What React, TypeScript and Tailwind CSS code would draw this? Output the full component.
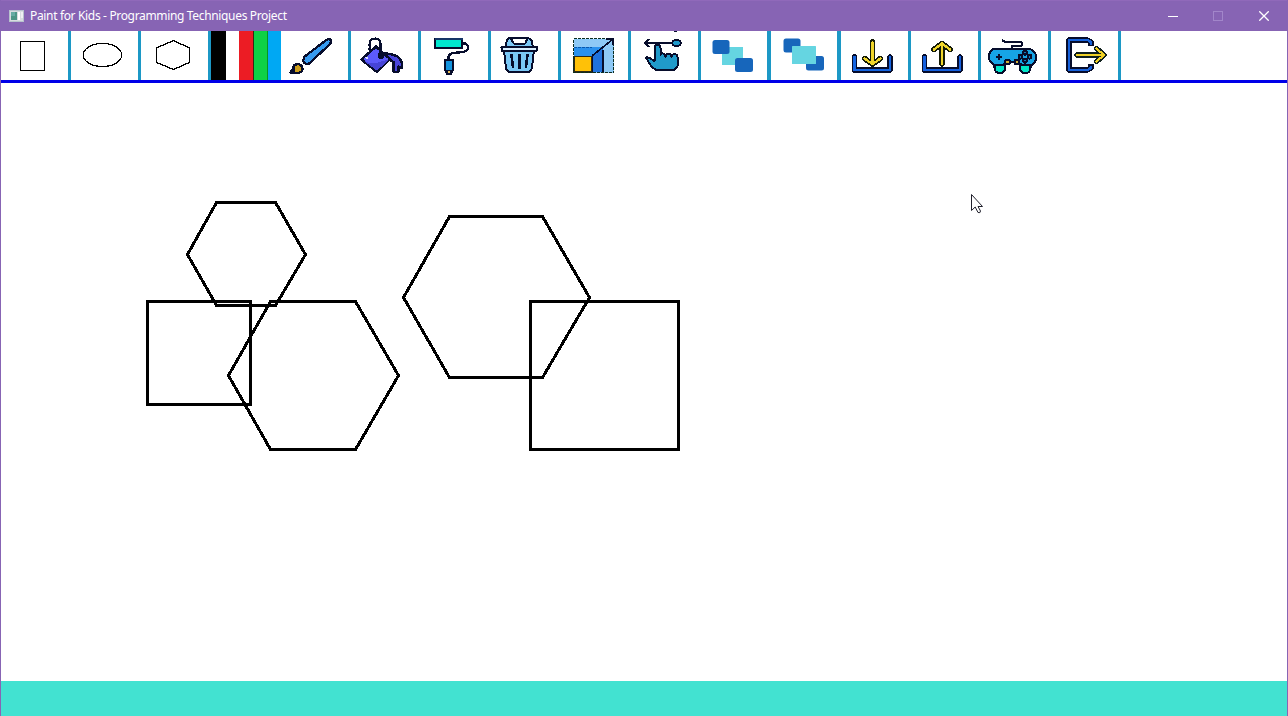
import type { ReactNode } from "react";

const NAVY = "#070d2c";

type Tool = { label: string; x: number; cell: string; icon: ReactNode };

const plain = "w-[70px] border-r-[3px] border-[#1c98c6]";
const wide = "w-[70px] border-r-4 border-[#1c98c6]";

const tools: Tool[] = [
  {
    label: "Rectangle",
    x: 1,
    cell: plain,
    icon: <rect x="20.5" y="41.5" width="24" height="29" fill="none" stroke="#000" />,
  },
  {
    label: "Ellipse",
    x: 71,
    cell: plain,
    icon: (
      <ellipse cx="102.5" cy="55" rx="19.2" ry="11.6" fill="none" stroke="#000" strokeWidth="1.3" shapeRendering="crispEdges" />
    ),
  },
  {
    label: "Hexagon",
    x: 141,
    cell: plain,
    icon: (
      <path
        d="M173.5 40.700L189.5 47.800V62.400L173.5 69.500L156.5 62.400V47.800Z"
        fill="none"
        stroke="#000"
        strokeWidth="1.300"
        shapeRendering="crispEdges"
      />
    ),
  },
  {
    label: "Colors",
    x: 211,
    cell: "w-[70px]",
    icon: (
      <g shapeRendering="crispEdges">
        <rect x="211" y="31" width="15" height="49" fill="#000" />
        <rect x="239" y="31" width="14" height="49" fill="#ec1c24" />
        <rect x="253" y="31" width="1" height="49" fill="#352a12" />
        <rect x="254" y="31" width="13" height="49" fill="#0ed145" />
        <rect x="267" y="31" width="1" height="49" fill="#08951e" />
        <rect x="268" y="31" width="13" height="49" fill="#00a8f3" />
      </g>
    ),
  },
  {
    label: "Brush",
    x: 281,
    cell: plain,
    icon: (
      <g stroke={NAVY} strokeWidth="2.300" strokeLinejoin="round" shapeRendering="crispEdges">
        <path d="M303.300 60.500L304 57L325 41Q328 38.500 330 39.500Q332 41 330 44L312 61L308.500 64Q303.500 64 303.300 60.500Z" fill="#369af0" />
        <path d="M290.500 72.800L293 70V67Q294.500 64 298 64Q302.500 65 302.500 69Q302 73 297 73H290.500Z" fill="#cc9d1b" />
        <path d="M290.500 72.800L293.500 67.500V72.800Z" fill={NAVY} />
      </g>
    ),
  },
  {
    label: "Fill",
    x: 351,
    cell: plain,
    icon: (
      <g stroke={NAVY} strokeWidth="2.500" strokeLinejoin="round" shapeRendering="crispEdges">
        <path d="M385 53.500Q396 54 399.500 58.500Q402.500 62 402 68L398.500 66.500V71Q396 73.500 393.500 71V62L388 59Z" fill="#4b46dc" />
        <path d="M376 46.500L390 59L377 72L361.500 59.500Z" fill="#5c5afb" />
        <path d="M363.500 60.500Q370 65 378 62.500Q384 60 388.500 60L377 70.800Z" fill="#4644d8" stroke="none" />
        <path d="M369.500 52V43Q370 38.500 375.500 38.500Q380.500 38.500 380.500 44V52L385 55" fill="none" strokeWidth="2.200" />
        <path d="M368.500 42V54" stroke="#fff" strokeWidth="1.500" strokeDasharray="2 2" />
        <circle cx="381" cy="55.500" r="2" fill={NAVY} />
        <path d="M365 57L368 59M368 57L366 59" stroke="#d7dcff" strokeWidth="1" />
      </g>
    ),
  },
  {
    label: "Stroke",
    x: 421,
    cell: plain,
    icon: (
      <g stroke={NAVY} strokeLinejoin="round" shapeRendering="crispEdges">
        <path d="M462.500 43.500H465Q468 44 468 48Q468 51 463 52L453 53Q448 54 448.500 59" fill="none" strokeWidth="2.300" />
        <rect x="435" y="39" width="27" height="9" fill="#00e7cf" strokeWidth="2" />
        <path d="M434.500 39H462.500" stroke="#163466" strokeWidth="2" />
        <path d="M445 60H453V70L451 74H447L445 70Z" fill="#1394df" strokeWidth="2" />
        <path d="M446.500 70.500H451.500L450 73.500H448Z" fill="#eabd55" strokeWidth="1.200" />
      </g>
    ),
  },
  {
    label: "Delete",
    x: 491,
    cell: plain,
    icon: (
      <g stroke={NAVY} strokeWidth="2" strokeLinejoin="round" shapeRendering="crispEdges">
        <path d="M505.500 47L507 39.500L510 37.800L514 43.500H525L528 37.800L531.500 40L533 47Z" fill="#7bc8f6" />
        <path d="M511 38H527L525 43.500H514Z" fill="#fff" strokeWidth="1.500" />
        <path d="M504 50H534L532 68Q531 72 527 72H511Q507 72 506 68Z" fill="#7bc8f6" />
        <rect x="501.500" y="46.500" width="35.500" height="4.500" rx="1" fill="#d9eeff" />
        <path d="M511.500 55L513 67M519.500 55V68M527.500 55L526 67" fill="none" strokeWidth="2.600" strokeLinecap="round" />
      </g>
    ),
  },
  {
    label: "Resize",
    x: 561,
    cell: plain,
    icon: (
      <g shapeRendering="crispEdges">
        <rect x="573.500" y="38.500" width="40" height="34" fill="#8ec9f6" />
        <path d="M574 47H603V72H574Z" fill="#2b91ed" />
        <path d="M592.500 56L603 48V72H592.500Z" fill="#1f72dc" />
        <rect x="574" y="56.500" width="18" height="15.500" fill="#ffc107" stroke="#302a12" strokeWidth="1.500" />
        <path d="M573.500 38.500H613.500V72.500H573.500Z" fill="none" stroke="#0b2d21" strokeWidth="1.400" strokeDasharray="3 1" />
        <path d="M574 47.500H592" stroke="#0758ae" strokeWidth="1.300" strokeDasharray="3 1" />
        <path d="M592.500 55.500L612.500 39.500M592.500 55V72M603 50V72M606 39H613V45" fill="none" stroke={NAVY} strokeWidth="1.700" />
      </g>
    ),
  },
  {
    label: "Move",
    x: 631,
    cell: plain,
    icon: (
      <g stroke={NAVY} strokeWidth="2" strokeLinejoin="round" strokeLinecap="round" shapeRendering="crispEdges">
        <path
          d="M654.500 61V47.500Q655 45 657.500 45Q660.500 45 660.500 48V55Q661 53 663 53.500Q665.500 53.500 665.500 57Q666 53.500 668.500 53.500Q671 53.500 671.500 57Q672 54 674.500 54Q677.500 54.500 677.500 57V66L674 70H656L652 67L648.500 62L646 57.500Q648 56.500 651 59Z"
          fill="#209aca"
        />
        <path d="M645.500 43H672M649 39.500L645 43L649 46.500" fill="none" strokeWidth="2" />
        <ellipse cx="676.500" cy="43" rx="4.300" ry="3.100" fill="#209aca" />
        <path d="M674.500 31.500H676.500" strokeWidth="1.400" />
      </g>
    ),
  },
  {
    label: "Send to back",
    x: 701,
    cell: wide,
    icon: (
      <g>
        <rect x="722" y="47" width="21" height="18" fill="#65d5e1" />
        <rect x="712.500" y="40" width="17" height="14" rx="2.500" fill="#1766bb" />
        <rect x="735" y="58" width="18" height="14" rx="2.500" fill="#1766bb" />
      </g>
    ),
  },
  {
    label: "Bring to front",
    x: 771,
    cell: wide,
    icon: (
      <g>
        <rect x="783.500" y="38.500" width="17" height="14" rx="2.500" fill="#1766bb" />
        <rect x="806" y="56" width="18" height="14.500" rx="2.500" fill="#1766bb" />
        <rect x="792" y="46" width="24" height="18" rx="0.500" fill="#65d5e1" />
      </g>
    ),
  },
  {
    label: "Save",
    x: 841,
    cell: plain,
    icon: (
      <g fill="none" strokeLinejoin="round" strokeLinecap="round" shapeRendering="crispEdges">
        <path d="M854.500 57V70H890V57" stroke={NAVY} strokeWidth="5.600" />
        <path d="M854.500 57V70H890V57" stroke="#1565e2" strokeWidth="2.400" />
        <path d="M872.500 42V62M864.500 58.500L872.500 64L880.500 58.500" stroke="#151b07" strokeWidth="5.600" />
        <path d="M872.500 42V62M864.500 58.500L872.500 64L880.500 58.500" stroke="#f0d52b" strokeWidth="2.300" />
      </g>
    ),
  },
  {
    label: "Load",
    x: 911,
    cell: plain,
    icon: (
      <g fill="none" strokeLinejoin="round" strokeLinecap="round" shapeRendering="crispEdges">
        <path d="M924.500 57V70H960V57" stroke={NAVY} strokeWidth="5.600" />
        <path d="M924.500 57V70H960V57" stroke="#1560df" strokeWidth="2.400" />
        <path d="M942 64V45M934 49.500L942 43.500L950 49.500" stroke="#151b07" strokeWidth="5.600" />
        <path d="M942 64V45M934 49.500L942 43.500L950 49.500" stroke="#efd52b" strokeWidth="2.300" />
      </g>
    ),
  },
  {
    label: "Play mode",
    x: 981,
    cell: plain,
    icon: (
      <g stroke={NAVY} strokeWidth="2.100" strokeLinejoin="round" shapeRendering="crispEdges">
        <path d="M1012 49V46H1021.500V42H1005L1002 40" fill="none" strokeWidth="2" />
        <path d="M994.500 64H1005V69Q1004 73 1001 73H999Q995 72.500 994.500 68Z" fill="#00e6c8" />
        <path d="M1020 64H1030.500V68Q1030 72.500 1026.500 73H1024Q1020.500 72 1020 69Z" fill="#00e6c8" />
        <path d="M994 49H1030Q1036 51 1036 57Q1036 64 1031 65H1022L1017 62H1007L1003 65H995Q989 63 989 57Q989 50 994 49Z" fill="#16a4e6" />
        <circle cx="1007.500" cy="62" r="2.300" fill="#d3af31" />
        <circle cx="1017" cy="62" r="2.300" fill="#d3af31" />
        <path d="M996 57H1002M999 54V60" />
        <g fill="#157abb" strokeWidth="2.100">
          <circle cx="1025" cy="52.700" r="1.900" />
          <circle cx="1020.500" cy="56.700" r="1.900" />
          <circle cx="1029.500" cy="56.700" r="1.900" />
          <circle cx="1025" cy="60.700" r="1.900" />
        </g>
      </g>
    ),
  },
  {
    label: "Exit",
    x: 1051,
    cell: plain,
    icon: (
      <g fill="none" strokeLinejoin="round" shapeRendering="crispEdges">
        <path d="M1091 46V42L1087.500 40H1069V70H1087.500L1091 68V64" stroke={NAVY} strokeWidth="5.400" />
        <path d="M1091 44.500V42L1087.500 40H1069V70H1087.500L1091 68V65.500" stroke="#1762dc" strokeWidth="2.400" />
        <g strokeLinecap="round">
          <path d="M1077 55H1103M1096.500 48.500L1104 55L1096.500 61.500" stroke="#10201d" strokeWidth="5.400" />
          <path d="M1077 55H1103M1096.500 48.500L1104 55L1096.500 61.500" stroke="#f0d127" strokeWidth="2.200" />
        </g>
      </g>
    ),
  },
];

function TitleBar() {
  return (
    <header className="flex h-[31px] shrink-0 items-center border-t border-[#9069ba] bg-[#8764b4] text-white">
      <svg className="mb-px ml-2 h-4 w-4 shrink-0" viewBox="0 0 16 16" shapeRendering="crispEdges">
        <rect x="0" y="2" width="15" height="12" fill="#d8dce0" />
        <rect x="0.500" y="2.500" width="14" height="11" fill="none" stroke="#b7c2cd" />
        <rect x="2" y="4" width="6" height="8" fill="#4c9686" />
        <rect x="2" y="4" width="4" height="4" fill="#66aca4" />
        <rect x="9" y="4" width="2" height="8" fill="#fff" />
        <rect x="12" y="4" width="2" height="6" fill="#eef0f2" />
      </svg>
      <h1 className="ml-[5px] whitespace-nowrap font-['Noto_Sans',sans-serif] text-[12px] leading-none tracking-[-0.34px]">
        Paint for Kids - Programming Techniques Project
      </h1>
      <div className="ml-auto flex h-full pb-px">
        <button aria-label="Minimize" className="flex w-[45px] items-center justify-center">
          <svg className="h-[10px] w-[10px]" viewBox="0 0 10 10">
            <path d="M0 5.500H10" stroke="#fff" />
          </svg>
        </button>
        <button aria-label="Maximize" className="flex w-[46px] items-center justify-center">
          <svg className="h-[10px] w-[10px]" viewBox="0 0 10 10">
            <rect x="0.500" y="0.500" width="9" height="9" fill="none" stroke="#a286ca" />
          </svg>
        </button>
        <button aria-label="Close" className="flex w-[46px] items-center justify-center">
          <svg className="h-[10px] w-[10px]" viewBox="0 0 10 10">
            <path d="M0.300 0.300L9.700 9.700M9.700 0.300L0.300 9.700" stroke="#fff" strokeWidth="1.300" />
          </svg>
        </button>
      </div>
    </header>
  );
}

function Toolbar() {
  return (
    <nav className="flex h-[52px] shrink-0 border-b-[3px] border-[#0000e8] bg-white">
      {tools.map((t) => (
        <button key={t.label} aria-label={t.label} className={`h-[49px] shrink-0 ${t.cell}`}>
          <svg
            className={t.label === "Colors" ? "block h-[49px] w-[70px]" : "block h-[49px] w-[66px]"}
            viewBox={`${t.x} 31 ${t.label === "Colors" ? 70 : 66} 49`}
          >
            {t.icon}
          </svg>
        </button>
      ))}
    </nav>
  );
}

function Canvas() {
  return (
    <main className="min-h-0 flex-1 bg-white">
      <svg className="block h-[598px] w-[1286px]" viewBox="1 83 1286 598">
        <g fill="none" stroke="#000" strokeWidth="3" strokeLinejoin="round" shapeRendering="crispEdges">
          <path d="M216.500 202.500H275.500L305.500 254.500L275.500 305.500H216.500L187.500 254.500Z" />
          <path d="M270.500 301.500H355.500L398.500 375.500L355.500 449.500H270.500L228.500 375.500Z" />
          <path d="M449.500 216.500H542.500L589.500 297.500L542.500 377.500H449.500L403.500 297.500Z" />
          <rect x="147.500" y="301.500" width="103" height="103" strokeLinejoin="miter" />
          <rect x="530.500" y="301.500" width="148" height="148" strokeLinejoin="miter" />
        </g>
        <path
          d="M971.500 194.500V210.500L975.200 207L978 212.500Q980.500 213.500 980.500 211L978 206.500H982.500Z"
          fill="#fff"
          stroke="#20202c"
        />
      </svg>
    </main>
  );
}

export default function App() {
  return (
    <div className="flex h-[716px] w-[1288px] flex-col overflow-hidden border-x border-[#8764b4] bg-white">
      <TitleBar />
      <Toolbar />
      <Canvas />
      <footer className="h-[35px] shrink-0 bg-[#42e2d1]" />
    </div>
  );
}
